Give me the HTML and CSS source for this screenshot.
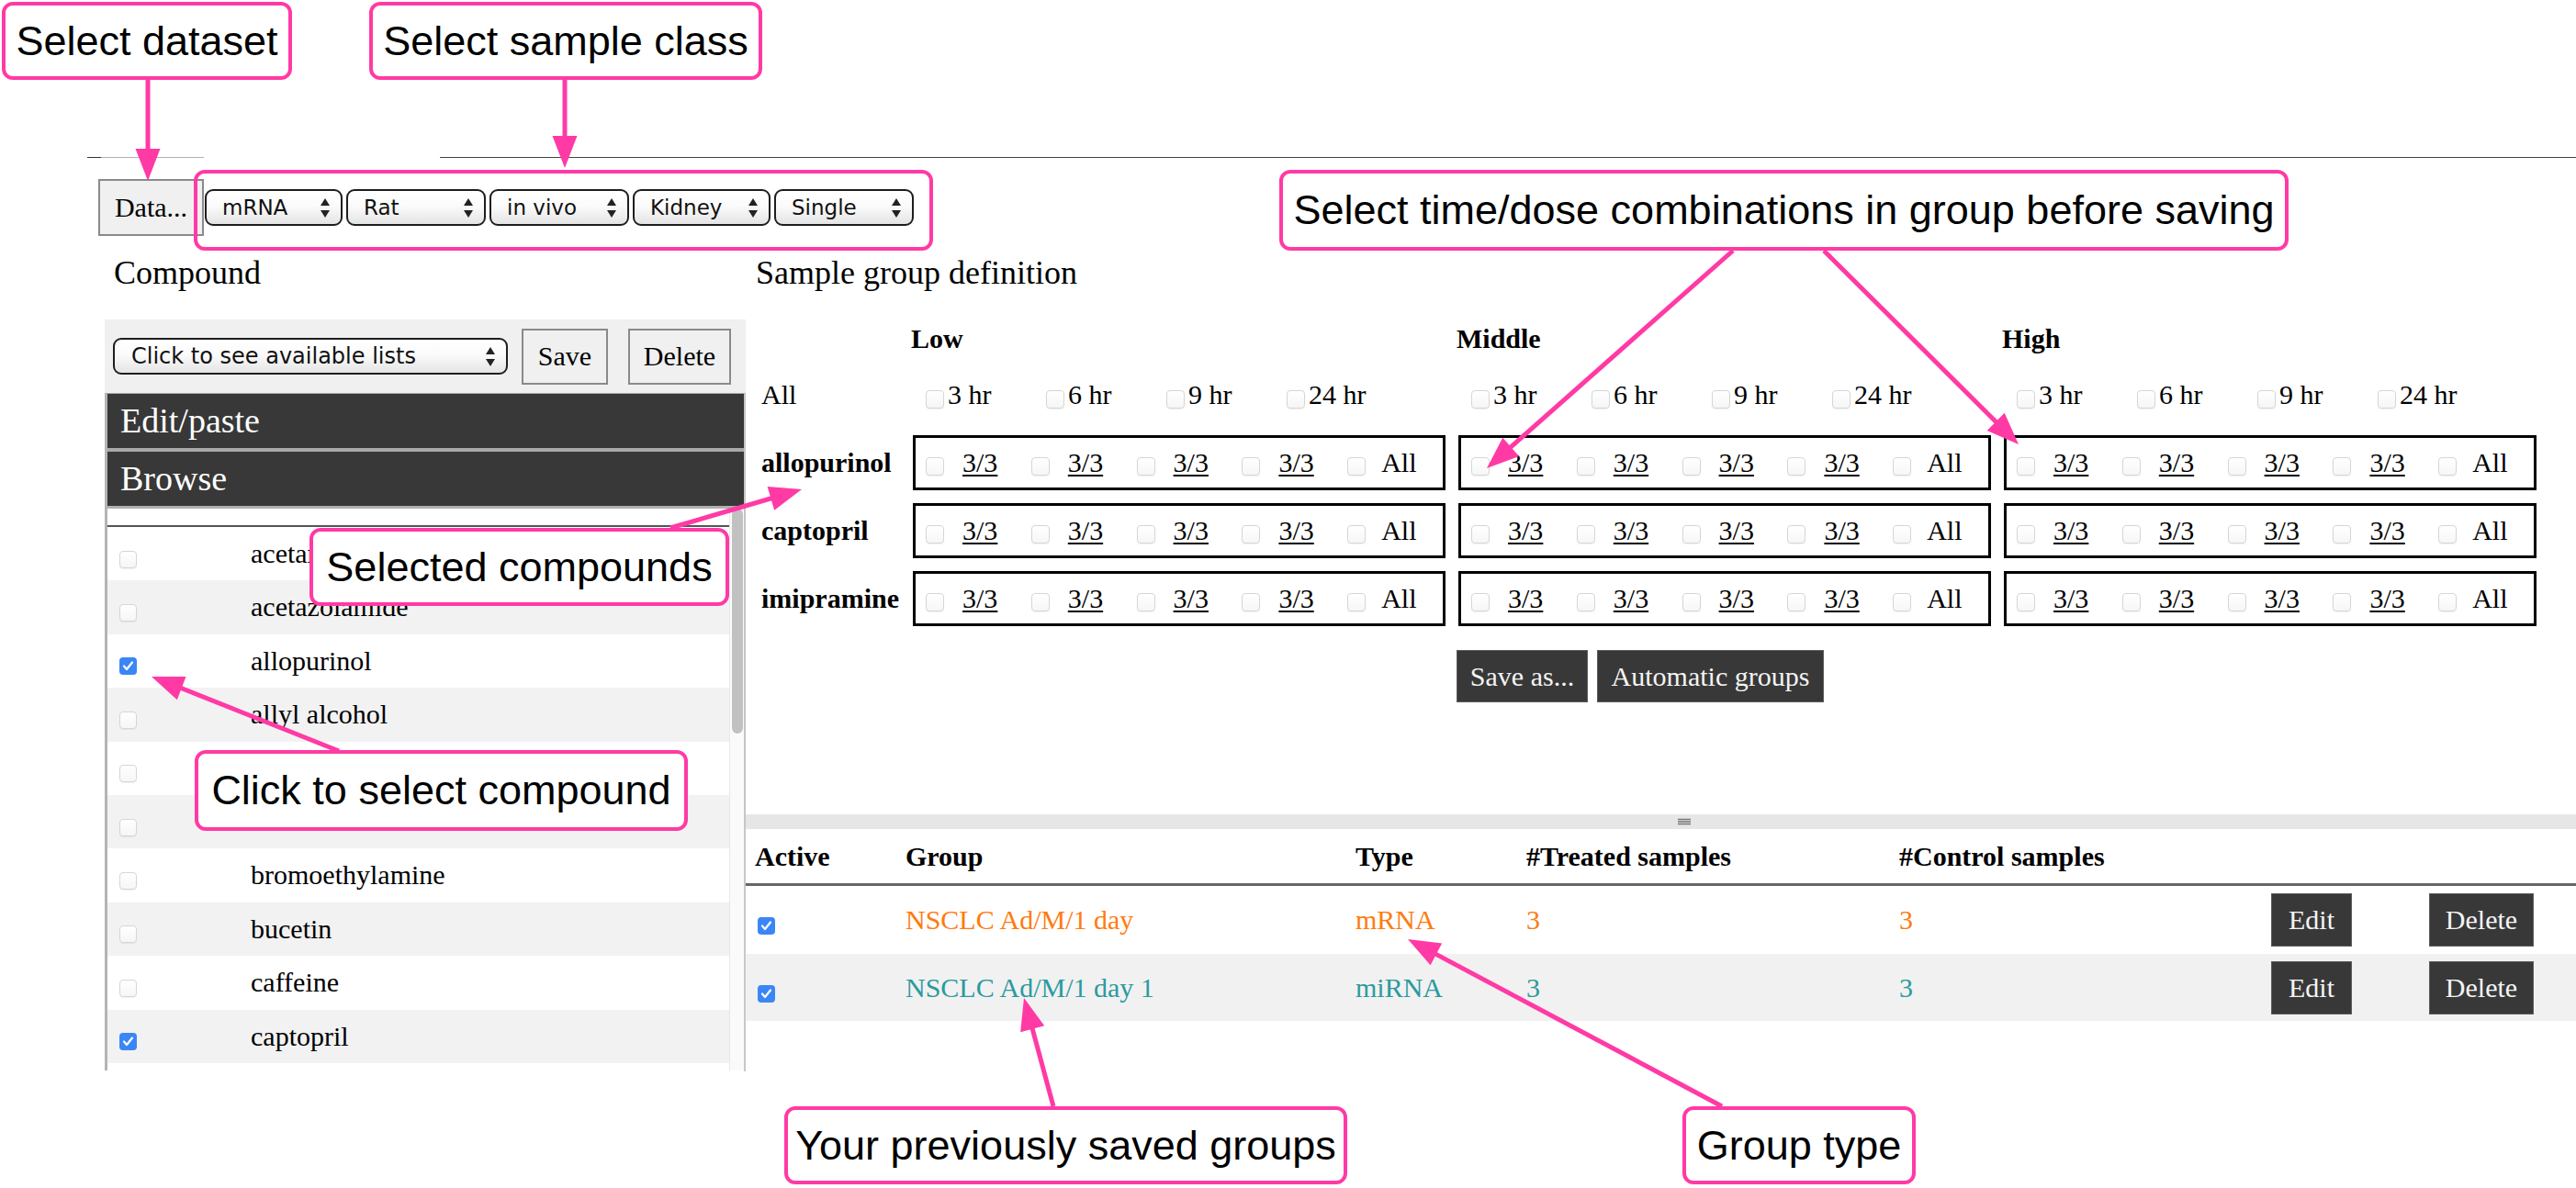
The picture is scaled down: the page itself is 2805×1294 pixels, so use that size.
FILE: index.html
```html
<!DOCTYPE html>
<html>
<head>
<meta charset="utf-8">
<title>Sample group definition</title>
<link rel="stylesheet" href="styles.css">
</head>
<body>
<div class="app">
  <div class="tabline"><span class="tl-a"></span><span class="tl-b"></span></div>

  <div class="toolbar">
    <button class="plain-btn data-btn">Data...</button>
    <div class="selects">
      <div class="sel s1">mRNA<svg class="updown" viewBox="0 0 12 23"><path d="M6 1 L11 9 H1 Z M1 14 H11 L6 22 Z" fill="#222"/></svg></div>
      <div class="sel s2">Rat<svg class="updown" viewBox="0 0 12 23"><path d="M6 1 L11 9 H1 Z M1 14 H11 L6 22 Z" fill="#222"/></svg></div>
      <div class="sel s3">in vivo<svg class="updown" viewBox="0 0 12 23"><path d="M6 1 L11 9 H1 Z M1 14 H11 L6 22 Z" fill="#222"/></svg></div>
      <div class="sel s4">Kidney<svg class="updown" viewBox="0 0 12 23"><path d="M6 1 L11 9 H1 Z M1 14 H11 L6 22 Z" fill="#222"/></svg></div>
      <div class="sel s5">Single<svg class="updown" viewBox="0 0 12 23"><path d="M6 1 L11 9 H1 Z M1 14 H11 L6 22 Z" fill="#222"/></svg></div>
    </div>
  </div>

  <div class="main">
    <aside class="left">
      <h2 class="heading h-left">Compound</h2>
      <div class="listbar">
        <div class="sel s-lists">Click to see available lists<svg class="updown" viewBox="0 0 12 23"><path d="M6 1 L11 9 H1 Z M1 14 H11 L6 22 Z" fill="#222"/></svg></div>
        <button class="plain-btn save-btn">Save</button>
        <button class="plain-btn del-btn">Delete</button>
      </div>
      <div class="acc">
        <div class="acc-head acc-first">Edit/paste</div>
        <div class="acc-head acc-second">Browse</div>
        <div class="browse">
          <div class="browse-list">
            <div class="rows">
              <div class="row"><span class="cb"></span><span class="name">acetaminophen</span></div>
              <div class="row"><span class="cb"></span><span class="name">acetazolamide</span></div>
              <div class="row"><span class="cb on"><svg viewBox="0 0 19 19"><path d="M5 9.5 L8 13 L14 5.5" fill="none" stroke="#fff" stroke-width="2.2" stroke-linecap="round" stroke-linejoin="round"/></svg></span><span class="name">allopurinol</span></div>
              <div class="row"><span class="cb"></span><span class="name">allyl alcohol</span></div>
              <div class="row"><span class="cb"></span><span class="name">alpha-naphthylisothiocyanate</span></div>
              <div class="row"><span class="cb"></span><span class="name">amiodarone</span></div>
              <div class="row"><span class="cb"></span><span class="name">bromoethylamine</span></div>
              <div class="row"><span class="cb"></span><span class="name">bucetin</span></div>
              <div class="row"><span class="cb"></span><span class="name">caffeine</span></div>
              <div class="row"><span class="cb on"><svg viewBox="0 0 19 19"><path d="M5 9.5 L8 13 L14 5.5" fill="none" stroke="#fff" stroke-width="2.2" stroke-linecap="round" stroke-linejoin="round"/></svg></span><span class="name">captopril</span></div>
              <div class="row"><span class="cb"></span><span class="name">carbamazepine</span></div>
            </div>
          </div>
          <div class="vscroll"><div class="thumb"></div></div>
        </div>
      </div>
    </aside>

    <section class="right">
      <div class="groupdef">
        <h2 class="heading h-right">Sample group definition</h2>
        <div class="dose-grid">
          <div></div>
          <div class="dose-h">Low</div>
          <div class="dose-h">Middle</div>
          <div class="dose-h">High</div>

          <div class="lab">All</div>
          <div class="all-cell">
            <label class="hr"><span class="cb"></span>3 hr</label>
            <label class="hr"><span class="cb"></span>6 hr</label>
            <label class="hr"><span class="cb"></span>9 hr</label>
            <label class="hr"><span class="cb"></span>24 hr</label>
          </div>
          <div class="all-cell">
            <label class="hr"><span class="cb"></span>3 hr</label>
            <label class="hr"><span class="cb"></span>6 hr</label>
            <label class="hr"><span class="cb"></span>9 hr</label>
            <label class="hr"><span class="cb"></span>24 hr</label>
          </div>
          <div class="all-cell">
            <label class="hr"><span class="cb"></span>3 hr</label>
            <label class="hr"><span class="cb"></span>6 hr</label>
            <label class="hr"><span class="cb"></span>9 hr</label>
            <label class="hr"><span class="cb"></span>24 hr</label>
          </div>

          <div class="lab cmp">allopurinol</div>
          <div class="cbox"><div class="cc"><span class="cb"></span><u>3/3</u></div><div class="cc"><span class="cb"></span><u>3/3</u></div><div class="cc"><span class="cb"></span><u>3/3</u></div><div class="cc"><span class="cb"></span><u>3/3</u></div><div class="cc"><span class="cb"></span><span class="all">All</span></div></div>
          <div class="cbox"><div class="cc"><span class="cb"></span><u>3/3</u></div><div class="cc"><span class="cb"></span><u>3/3</u></div><div class="cc"><span class="cb"></span><u>3/3</u></div><div class="cc"><span class="cb"></span><u>3/3</u></div><div class="cc"><span class="cb"></span><span class="all">All</span></div></div>
          <div class="cbox"><div class="cc"><span class="cb"></span><u>3/3</u></div><div class="cc"><span class="cb"></span><u>3/3</u></div><div class="cc"><span class="cb"></span><u>3/3</u></div><div class="cc"><span class="cb"></span><u>3/3</u></div><div class="cc"><span class="cb"></span><span class="all">All</span></div></div>

          <div class="lab cmp">captopril</div>
          <div class="cbox"><div class="cc"><span class="cb"></span><u>3/3</u></div><div class="cc"><span class="cb"></span><u>3/3</u></div><div class="cc"><span class="cb"></span><u>3/3</u></div><div class="cc"><span class="cb"></span><u>3/3</u></div><div class="cc"><span class="cb"></span><span class="all">All</span></div></div>
          <div class="cbox"><div class="cc"><span class="cb"></span><u>3/3</u></div><div class="cc"><span class="cb"></span><u>3/3</u></div><div class="cc"><span class="cb"></span><u>3/3</u></div><div class="cc"><span class="cb"></span><u>3/3</u></div><div class="cc"><span class="cb"></span><span class="all">All</span></div></div>
          <div class="cbox"><div class="cc"><span class="cb"></span><u>3/3</u></div><div class="cc"><span class="cb"></span><u>3/3</u></div><div class="cc"><span class="cb"></span><u>3/3</u></div><div class="cc"><span class="cb"></span><u>3/3</u></div><div class="cc"><span class="cb"></span><span class="all">All</span></div></div>

          <div class="lab cmp">imipramine</div>
          <div class="cbox"><div class="cc"><span class="cb"></span><u>3/3</u></div><div class="cc"><span class="cb"></span><u>3/3</u></div><div class="cc"><span class="cb"></span><u>3/3</u></div><div class="cc"><span class="cb"></span><u>3/3</u></div><div class="cc"><span class="cb"></span><span class="all">All</span></div></div>
          <div class="cbox"><div class="cc"><span class="cb"></span><u>3/3</u></div><div class="cc"><span class="cb"></span><u>3/3</u></div><div class="cc"><span class="cb"></span><u>3/3</u></div><div class="cc"><span class="cb"></span><u>3/3</u></div><div class="cc"><span class="cb"></span><span class="all">All</span></div></div>
          <div class="cbox"><div class="cc"><span class="cb"></span><u>3/3</u></div><div class="cc"><span class="cb"></span><u>3/3</u></div><div class="cc"><span class="cb"></span><u>3/3</u></div><div class="cc"><span class="cb"></span><u>3/3</u></div><div class="cc"><span class="cb"></span><span class="all">All</span></div></div>
        </div>
        <div class="gd-actions">
          <button class="dark-btn b-saveas">Save as...</button>
          <button class="dark-btn b-auto">Automatic groups</button>
        </div>
      </div>

      <div class="splitter"><svg class="grip" viewBox="0 0 16 8"><path d="M1 1.5 H15 M1 4 H15 M1 6.5 H15" stroke="#777" stroke-width="1.3"/></svg></div>

      <div class="groups">
        <div class="g-row g-head">
          <div class="gc">Active</div>
          <div class="gc">Group</div>
          <div class="gc">Type</div>
          <div class="gc">#Treated samples</div>
          <div class="gc">#Control samples</div>
          <div class="gc"></div>
          <div class="gc"></div>
        </div>
        <div class="g-row orange">
          <div class="gc"><span class="cb on gcb"><svg viewBox="0 0 19 19"><path d="M5 9.5 L8 13 L14 5.5" fill="none" stroke="#fff" stroke-width="2.2" stroke-linecap="round" stroke-linejoin="round"/></svg></span></div>
          <div class="gc">NSCLC Ad/M/1 day</div>
          <div class="gc">mRNA</div>
          <div class="gc">3</div>
          <div class="gc">3</div>
          <div class="gc"><button class="dark-btn b-edit">Edit</button></div>
          <div class="gc"><button class="dark-btn b-del">Delete</button></div>
        </div>
        <div class="g-row teal alt">
          <div class="gc"><span class="cb on gcb"><svg viewBox="0 0 19 19"><path d="M5 9.5 L8 13 L14 5.5" fill="none" stroke="#fff" stroke-width="2.2" stroke-linecap="round" stroke-linejoin="round"/></svg></span></div>
          <div class="gc">NSCLC Ad/M/1 day 1</div>
          <div class="gc">miRNA</div>
          <div class="gc">3</div>
          <div class="gc">3</div>
          <div class="gc"><button class="dark-btn b-edit">Edit</button></div>
          <div class="gc"><button class="dark-btn b-del">Delete</button></div>
        </div>
      </div>
    </section>
  </div>
</div>

<div class="notes">
  <svg class="arrows" width="2805" height="1294" viewBox="0 0 2805 1294">
    <g stroke="#ff3aa5" stroke-width="5" fill="none">
      <line x1="161" y1="87" x2="161" y2="167"/>
      <line x1="615" y1="87" x2="615" y2="153"/>
      <line x1="1887" y1="273" x2="1641.5" y2="490.1"/>
      <line x1="1986" y1="273" x2="2176.7" y2="462.8"/>
      <line x1="730" y1="575" x2="844.2" y2="541.5"/>
      <line x1="369" y1="818" x2="193" y2="747.8"/>
      <line x1="1147" y1="1205" x2="1122.9" y2="1115.9"/>
      <line x1="1875" y1="1205" x2="1559.5" y2="1037.1"/>
    </g>
    <g fill="#ff3aa5">
      <polygon points="161,197 147.5,162 174.5,162"/>
      <polygon points="615,183 601.5,148 628.5,148"/>
      <polygon points="1619,510 1636.3,476.7 1654.1,496.9"/>
      <polygon points="2198,484 2163.7,468.9 2182.7,449.7"/>
      <polygon points="873,533 843.2,555.8 835.6,529.9"/>
      <polygon points="165,737 202.5,737 192.8,762.2"/>
      <polygon points="1115,1087 1137.2,1117.3 1111.2,1124.3"/>
      <polygon points="1533,1023 1570.2,1027.5 1557.6,1051.3"/>
    </g>
  </svg>
  <div class="frame f-selects"></div>
  <div class="callout c-dataset">Select dataset</div>
  <div class="callout c-class">Select sample class</div>
  <div class="callout c-time">Select time/dose combinations in group before saving</div>
  <div class="callout c-selected">Selected compounds</div>
  <div class="callout c-click">Click to select compound</div>
  <div class="callout c-saved">Your previously saved groups</div>
  <div class="callout c-type">Group type</div>
</div>
</body>
</html>
```

FILE: styles.css
```css
* { box-sizing: border-box; }
html, body { margin: 0; padding: 0; background: #fff; }
body {
  width: 2805px;
  height: 1294px;
  overflow: hidden;
  position: relative;
  font-family: "Liberation Serif", "Times New Roman", serif;
  color: #000;
}

/* top line */
.tabline { display: flex; padding-top: 171px; height: 172px; }
.tl-a { margin-left: 95px; width: 127px; height: 1px; background: linear-gradient(90deg, #333 0 15px, #b0b0b0 15px); }
.tl-b { margin-left: 257px; flex: 1; height: 1px; background: #444; }

/* toolbar */
.toolbar { display: flex; align-items: center; margin-top: 23px; padding-left: 107px; height: 62px; }
.plain-btn {
  font-family: "Liberation Serif", "Times New Roman", serif;
  font-size: 30px;
  color: #000;
  background: #f0f0f0;
  border: 2px solid #8a8a8a;
  border-radius: 0;
  padding: 0;
  margin: 0;
}
.data-btn { width: 115px; height: 62px; }
.selects { display: flex; gap: 4px; margin-left: 1px; }
.sel {
  position: relative;
  display: flex;
  align-items: center;
  height: 40px;
  border: 2px solid #1e1e1e;
  border-radius: 9px;
  background: linear-gradient(#ffffff 0%, #fbfbfb 45%, #e4e4e4 100%);
  font-family: "DejaVu Sans", "Liberation Sans", sans-serif;
  font-size: 23px;
  color: #111;
  padding-left: 17px;
  white-space: nowrap;
}
.updown { position: absolute; right: 11px; top: 7px; width: 12px; height: 23px; }
.s1 { width: 150px; }
.s2 { width: 152px; }
.s3 { width: 152px; }
.s4 { width: 150px; }
.s5 { width: 152px; }

/* main */
.main { display: flex; align-items: flex-start; }
.left { margin-left: 114px; width: 698px; flex: none; }
.right { flex: 1; min-width: 0; }

.heading {
  margin: 20px 0 0;
  font-size: 36px;
  font-weight: normal;
  line-height: 41px;
  height: 41px;
  white-space: nowrap;
}
.h-left { padding-left: 10px; }
.h-right { padding-left: 11px; margin-top: 0; }

.listbar {
  margin-top: 30px;
  height: 80px;
  background: #f0f0f0;
  display: flex;
  align-items: center;
  padding-left: 9px;
}
.s-lists { width: 430px; font-size: 24px; padding-left: 18px; }
.save-btn { margin-left: 15px; width: 94px; height: 61px; }
.del-btn { margin-left: 22px; width: 112px; height: 61px; }

.acc {
  border-left: 3px solid #b4b4b4;
  border-right: 2px solid #c6c6c6;
  border-top: 1px solid #aaa;
}
.acc-head {
  background: #383838;
  color: #fff;
  font-size: 38px;
  height: 59px;
  line-height: 59px;
  padding-left: 14px;
}
.acc-first { border-bottom: 4px solid #a9a9a9; height: 63px; }
.acc-second { border-bottom: 3px solid #b0b0b0; height: 62px; }

.browse { display: flex; height: 612px; overflow: hidden; }
.browse-list { flex: 1; padding-top: 18px; }
.rows { border-top: 2px solid #555; }
.row {
  display: flex;
  align-items: center;
  height: 58.4px;
  padding-left: 13px;
  font-size: 30px;
  line-height: 58.4px;
  white-space: nowrap;
}
.row:nth-child(even) { background: #f2f2f2; }
.row .cb { margin-top: 12px; }
.name { margin-left: 124px; }
.vscroll { width: 16px; border-left: 1px solid #e8e8e8; background: #fafafa; flex: none; }
.thumb { width: 12px; height: 245px; margin-left: 2px; background: #c1c1c1; border-radius: 6px; }

/* checkboxes */
.cb {
  display: inline-block;
  flex: none;
  width: 19px;
  height: 19px;
  border: 1px solid #d6d6d6;
  border-radius: 4px;
  background: linear-gradient(#ffffff, #f6f6f6);
  box-shadow: 0 1px 1px rgba(0, 0, 0, 0.06);
}
.cb.on {
  border: none;
  background: #3b86f6;
  box-shadow: none;
}
.cb.on svg { display: block; width: 19px; height: 19px; }

/* group definition */
.groupdef { height: 630px; padding-top: 20px; }
.dose-grid {
  margin-top: 34px;
  margin-left: 17px;
  display: grid;
  grid-template-columns: 151px 580px 580px 580px;
  grid-template-rows: 34px 60px 60px 60px 60px;
  column-gap: 14px;
  row-gap: 14px;
}
.dose-h { font-weight: bold; font-size: 30px; line-height: 34px; margin-left: -2px; }
.lab { font-size: 30px; line-height: 60px; white-space: nowrap; }
.lab.cmp { font-weight: bold; }
.all-cell { display: flex; align-items: center; padding-left: 14px; }
.hr {
  display: flex;
  align-items: center;
  width: 131px;
  font-size: 30px;
  line-height: 60px;
  white-space: nowrap;
}
.hr .cb { width: 20px; height: 20px; margin-top: 10px; margin-right: 4px; }
.cbox { display: flex; border: 3px solid #000; }
.cc {
  display: flex;
  align-items: center;
  width: 114.8px;
  padding-left: 11px;
  font-size: 30px;
  line-height: 54px;
}
.cc .cb { width: 20px; height: 20px; margin-top: 7px; }
.cc u { margin-left: 20px; text-decoration-thickness: 2px; text-underline-offset: 3px; }
.cc .all { margin-left: 17px; }

.gd-actions { margin-top: 26px; padding-left: 774px; display: flex; gap: 10px; }
.dark-btn {
  height: 57px;
  background: #383838;
  color: #f4f4f4;
  border: 1px solid #5c5c5c;
  border-radius: 0;
  font-family: "Liberation Serif", "Times New Roman", serif;
  font-size: 30px;
  padding: 0;
  margin: 0;
}
.b-saveas { width: 143px; }
.b-auto { width: 247px; }

.splitter { position: relative; height: 16px; background: #e6e6e6; }
.grip { position: absolute; left: 1014px; top: 4px; width: 16px; height: 8px; }

/* groups table */
.groups { height: 264px; box-shadow: -2px 0 0 #c8c8c8; }
.g-row {
  display: grid;
  grid-template-columns: 164px 490px 186px 406px 405px 172px 1fr;
  padding-left: 10px;
  height: 74px;
  font-size: 30px;
  line-height: 74px;
  white-space: nowrap;
}
.g-head {
  height: 62px;
  line-height: 59px;
  font-weight: bold;
  border-bottom: 3px solid #666;
}
.g-row.alt { background: #f1f1f1; height: 73px; }
.gc { display: flex; align-items: center; }
.gcb { margin-left: 3px; margin-top: 12px; }
.orange { color: #ff7b0f; }
.teal { color: #2b9aa0; }
.b-edit { width: 88px; height: 58px; }
.b-del { width: 114px; height: 58px; }

/* annotation overlay */
.notes { position: absolute; left: 0; top: 0; width: 2805px; height: 1294px; pointer-events: none; }
.arrows { position: absolute; left: 0; top: 0; }
.frame {
  position: absolute;
  border: 4px solid #ff3aa5;
  border-radius: 12px;
}
.f-selects { left: 211px; top: 185px; width: 805px; height: 88px; }
.callout {
  position: absolute;
  display: flex;
  align-items: center;
  justify-content: center;
  border: 4px solid #ff3aa5;
  border-radius: 12px;
  background: #fff;
  font-family: "Liberation Sans", Arial, sans-serif;
  font-size: 45px;
  color: #000;
  white-space: nowrap;
}
.c-dataset { left: 2px; top: 2px; width: 316px; height: 85px; }
.c-class { left: 402px; top: 2px; width: 428px; height: 85px; }
.c-time { left: 1393px; top: 185px; width: 1099px; height: 88px; }
.c-selected { left: 337px; top: 575px; width: 457px; height: 85px; }
.c-click { left: 212px; top: 817px; width: 537px; height: 88px; }
.c-saved { left: 854px; top: 1205px; width: 613px; height: 85px; }
.c-type { left: 1832px; top: 1205px; width: 254px; height: 85px; }
```
